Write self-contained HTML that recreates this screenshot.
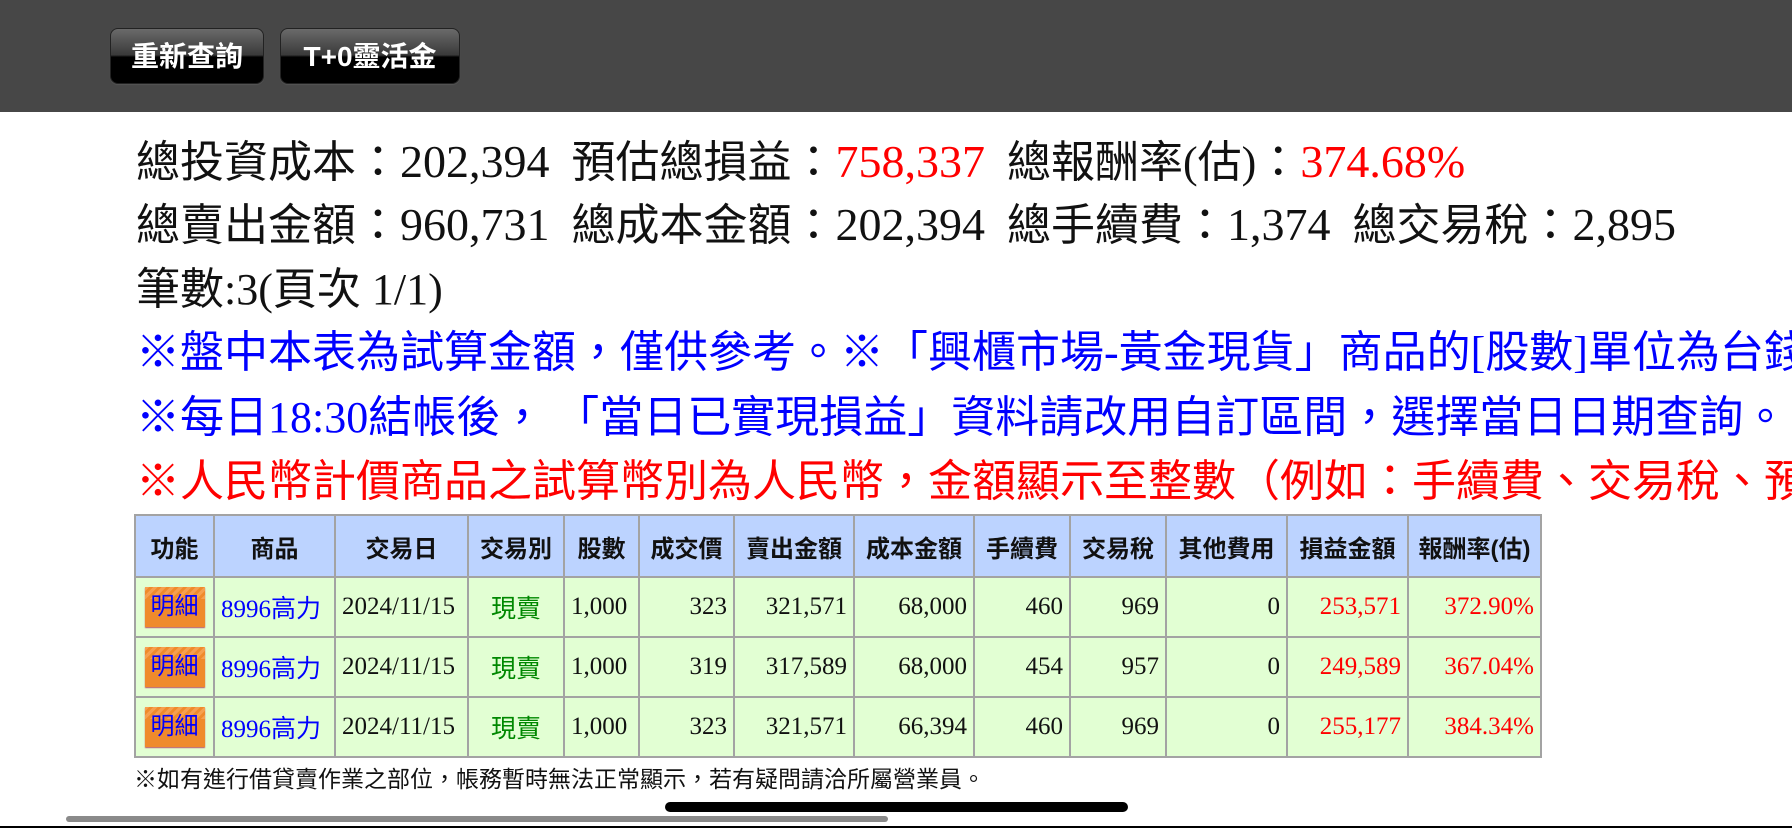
<!DOCTYPE html>
<html><head><meta charset="utf-8"><style>
html,body{margin:0;padding:0;width:1792px;height:828px;overflow:hidden;background:#fff;}
body{position:relative;font-family:"Liberation Serif","Noto Sans CJK TC",serif;}
.bar{position:absolute;left:0;top:0;width:1792px;height:112px;background:#474747;}
.btn{position:absolute;top:28px;height:56px;border-radius:8px;background:linear-gradient(#6a6a6a 0%,#3a3a3a 48%,#000 52%,#000 100%);border:1px solid #222;box-shadow:0 1px 1px #555;color:#fff;font:bold 28px "Liberation Sans","Noto Sans CJK TC",sans-serif;line-height:56px;text-align:center;box-sizing:border-box;}
.ln{position:absolute;left:136px;font-size:44px;line-height:64px;white-space:nowrap;color:#111;}
.n{font-size:46px;}
.r{color:#f00}.b{color:#00f}
table{position:absolute;left:134px;top:514px;width:1406px;border-collapse:collapse;font-size:25px;table-layout:fixed;}
td,th{border:2px solid #a3a3a3;padding:0 6px;white-space:nowrap;}
th{background:#bcd3ff;height:60px;font:bold 24px "Liberation Sans","Noto Sans CJK TC",sans-serif;color:#111;}
td{background:#e2ffd3;height:58px;color:#111;}
.rt{text-align:right}.ct{text-align:center}
.bl{color:#00f}.gr{color:#080}.rd{color:#f00}
.mx{display:inline-block;width:60px;height:40px;line-height:40px;background:repeating-linear-gradient(135deg,#f6a050 0 3px,#ef8a2c 3px 6px);background-size:100% 12px;background-repeat:no-repeat;background-color:#ef8a2c;color:#00f;font-family:"Liberation Sans","Noto Sans CJK TC",sans-serif;font-size:24px;text-align:center;box-shadow:0 1px 1px #b56;}
.fn{position:absolute;left:134px;top:765px;font-size:23px;line-height:28px;color:#111;white-space:nowrap;font-family:"Liberation Sans","Noto Sans CJK TC",sans-serif;}
</style></head><body>
<div class="bar"></div>
<div class="btn" style="left:110px;width:154px;">重新查詢</div>
<div class="btn" style="left:280px;width:180px;">T+0靈活金</div>

<div class="ln" style="top:130px">總投資成本：<span class="n">202,394</span>&nbsp;&nbsp;預估總損益：<span class="r n">758,337</span>&nbsp;&nbsp;總報酬率(估)：<span class="r n">374.68%</span></div>
<div class="ln" style="top:193px">總賣出金額：<span class="n">960,731</span>&nbsp;&nbsp;總成本金額：<span class="n">202,394</span>&nbsp;&nbsp;總手續費：<span class="n">1,374</span>&nbsp;&nbsp;總交易稅：<span class="n">2,895</span></div>
<div class="ln" style="top:258px">筆數:3(頁次 1/1)</div>
<div class="ln b" style="top:321px">※盤中本表為試算金額，僅供參考。※「興櫃市場-黃金現貨」商品的[股數]單位為台錢</div>
<div class="ln b" style="top:386px">※每日18:30結帳後，&nbsp;「當日已實現損益」資料請改用自訂區間，選擇當日日期查詢。</div>
<div class="ln r" style="top:450px">※人民幣計價商品之試算幣別為人民幣，金額顯示至整數（例如：手續費、交易稅、預</div>

<table>
<colgroup><col style="width:79px"><col style="width:121px"><col style="width:133px"><col style="width:96px"><col style="width:75px"><col style="width:95px"><col style="width:120px"><col style="width:120px"><col style="width:96px"><col style="width:96px"><col style="width:121px"><col style="width:121px"><col style="width:133px"></colgroup>
<tr><th>功能</th><th>商品</th><th>交易日</th><th>交易別</th><th>股數</th><th>成交價</th><th>賣出金額</th><th>成本金額</th><th>手續費</th><th>交易稅</th><th>其他費用</th><th>損益金額</th><th>報酬率(估)</th></tr>
<tr><td class="ct"><span class="mx">明細</span></td><td class="bl">8996高力</td><td>2024/11/15</td><td class="ct gr">現賣</td><td>1,000</td><td class="rt">323</td><td class="rt">321,571</td><td class="rt">68,000</td><td class="rt">460</td><td class="rt">969</td><td class="rt">0</td><td class="rt rd">253,571</td><td class="rt rd">372.90%</td></tr>
<tr><td class="ct"><span class="mx">明細</span></td><td class="bl">8996高力</td><td>2024/11/15</td><td class="ct gr">現賣</td><td>1,000</td><td class="rt">319</td><td class="rt">317,589</td><td class="rt">68,000</td><td class="rt">454</td><td class="rt">957</td><td class="rt">0</td><td class="rt rd">249,589</td><td class="rt rd">367.04%</td></tr>
<tr><td class="ct"><span class="mx">明細</span></td><td class="bl">8996高力</td><td>2024/11/15</td><td class="ct gr">現賣</td><td>1,000</td><td class="rt">323</td><td class="rt">321,571</td><td class="rt">66,394</td><td class="rt">460</td><td class="rt">969</td><td class="rt">0</td><td class="rt rd">255,177</td><td class="rt rd">384.34%</td></tr>
</table>
<div class="fn">※如有進行借貸賣作業之部位，帳務暫時無法正常顯示，若有疑問請洽所屬營業員。</div>

<div style="position:absolute;left:665px;top:802px;width:463px;height:10px;border-radius:5px;background:#000;"></div>
<div style="position:absolute;left:66px;top:816px;width:822px;height:6px;border-radius:3px;background:#8a8a8a;"></div>
<div style="position:absolute;left:0;top:826px;width:1792px;height:2px;background:#000;"></div>
</body></html>
